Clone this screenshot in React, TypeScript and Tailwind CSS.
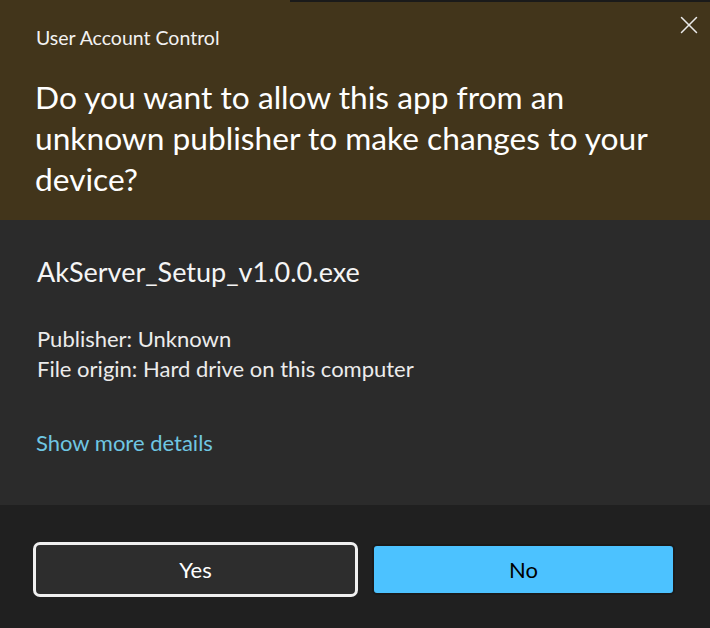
import { X } from "lucide-react";

export default function App() {
  return (
    <div
      className="w-[710px] h-[628px] flex flex-col bg-[#202020] text-white overflow-hidden"
      style={{ fontFamily: "Lato, 'Noto Sans', sans-serif" }}
    >
      <div className="relative h-[220px] bg-[#42351b] pl-[36px] pt-[26px]">
        <div className="absolute top-0 right-0 w-[420px] h-[2px] bg-[#1a1a1a]" />
        <div className="text-[19.5px] leading-[24px] text-[#f2f2f2]">User Account Control</div>
        <div className="mt-[27px] -ml-[1px] text-[31.7px] leading-[41px] text-white pr-[30px]">
          Do you want to allow this app from an unknown publisher to make changes to your device?
        </div>
        <button className="absolute right-[6px] top-[10px] text-[#eaeaea]">
          <X className="w-[30px] h-[30px]" strokeWidth={1.2} />
        </button>
      </div>

      <div className="h-[285px] bg-[#2b2b2b] pl-[37px] pt-[36px]">
        <div className="text-[27px] leading-[32px] text-[#f5f5f5]">AkServer_Setup_v1.0.0.exe</div>
        <div className="mt-[36px] text-[22px] leading-[30px] text-[#ececec]">
          <div>Publisher: Unknown</div>
          <div>File origin: Hard drive on this computer</div>
        </div>
        <div className="mt-[46px] -ml-[1px] text-[22px] leading-[26px] text-[#6fc6e2]">Show more details</div>
      </div>

      <div className="flex-1 flex items-start gap-[14px] pl-[33px] pt-[37px]">
        <button className="w-[325px] h-[55px] rounded-[7px] border-[3px] border-[#f0f0f0] bg-[#2d2d2d] text-[22px] text-white">
          Yes
        </button>
        <button className="w-[303px] h-[51px] mt-[2px] rounded-[5px] border-2 border-[#1a1a1a] bg-[#4cc2ff] text-[22px] text-black">
          No
        </button>
      </div>
    </div>
  );
}
